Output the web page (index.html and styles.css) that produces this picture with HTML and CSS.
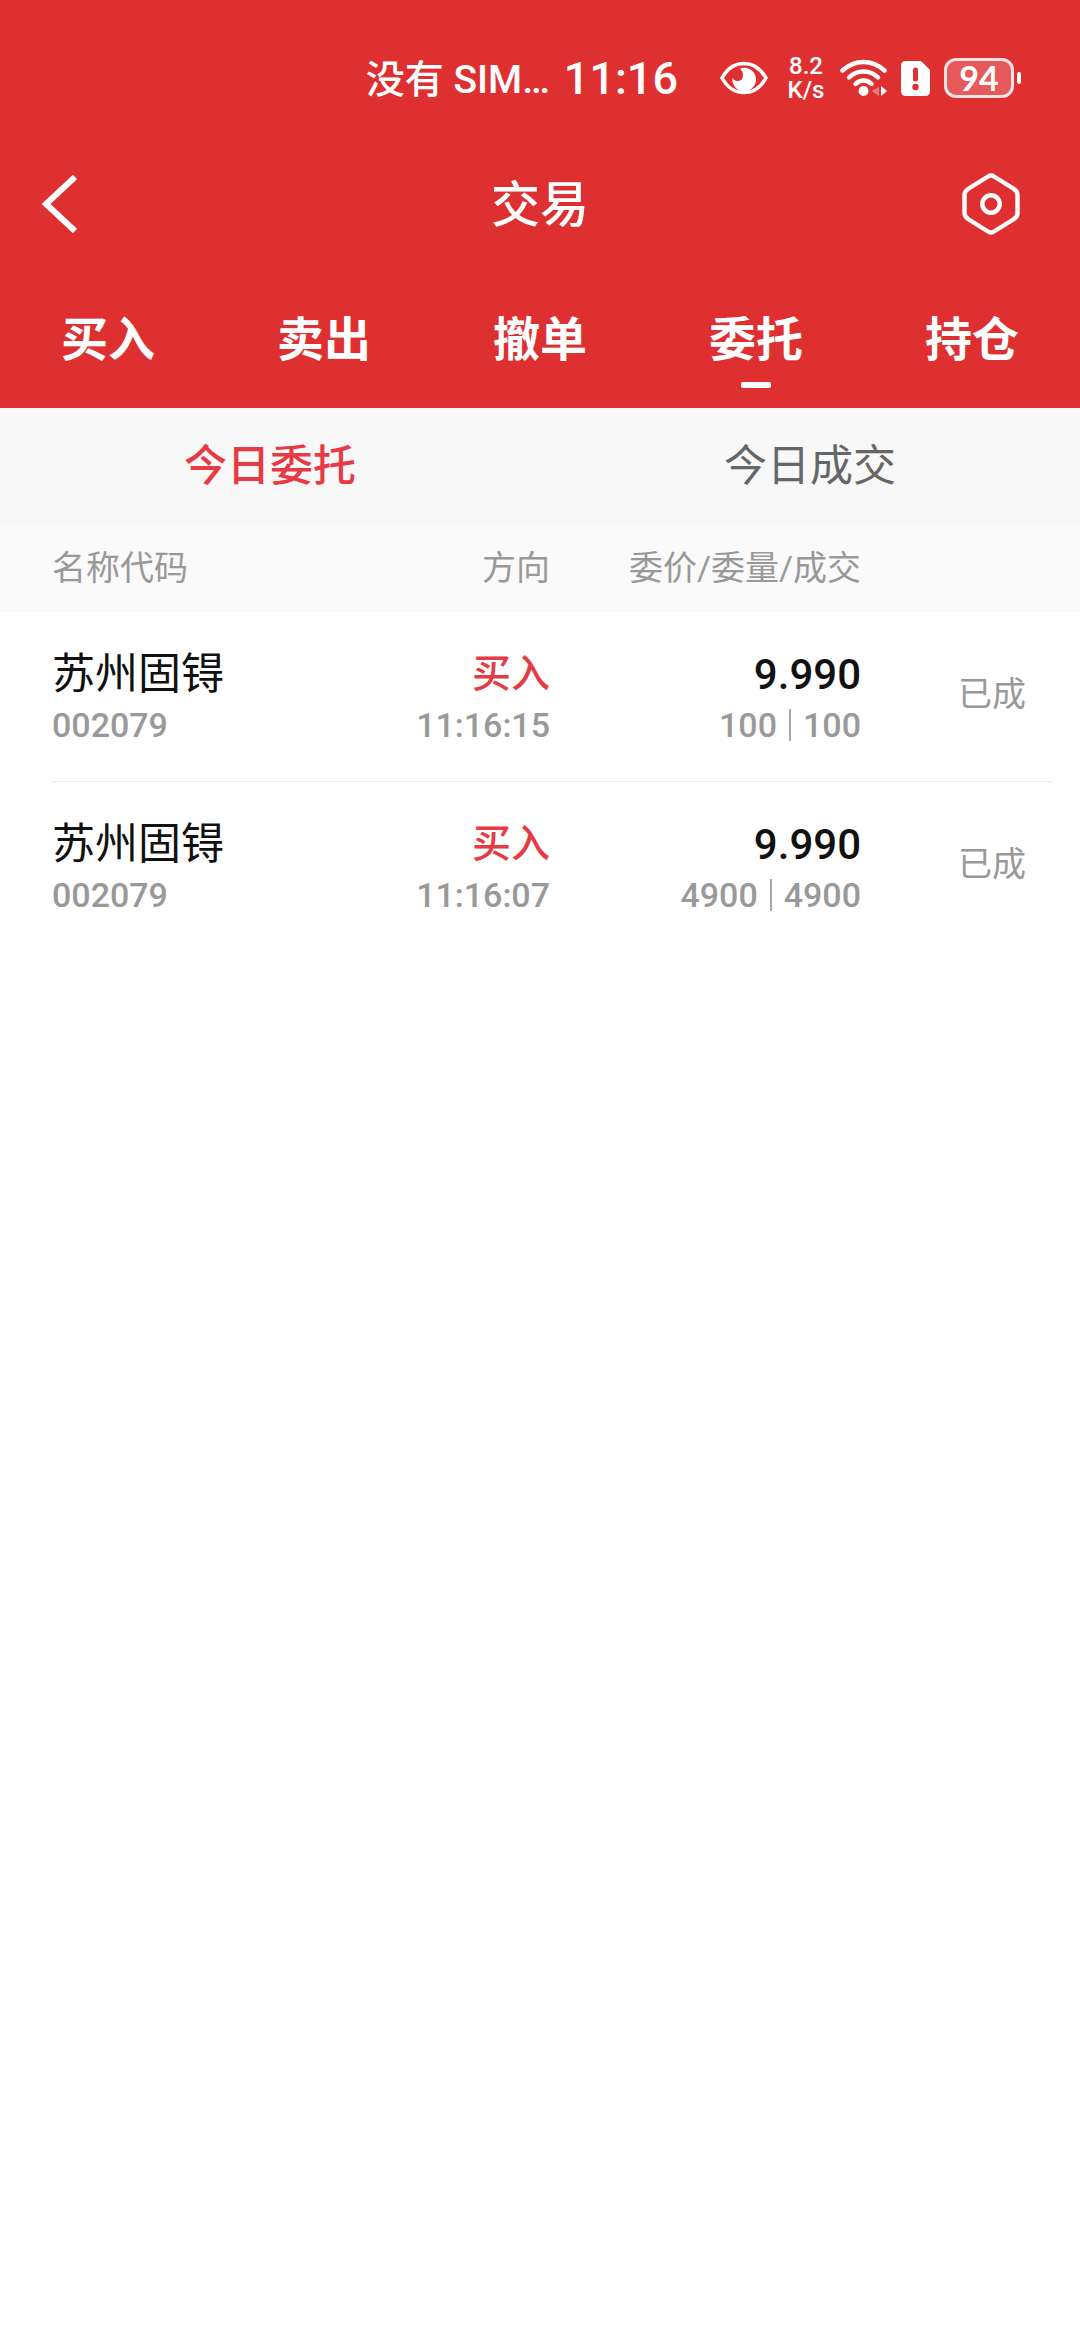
FILE: index.html
```html
<!DOCTYPE html>
<html lang="zh-CN">
<head>
  <title>交易</title>
  <meta charset="utf-8" />
  <meta name="viewport" content="width=device-width, initial-scale=1.0">
  <link rel="stylesheet" href="styles.css">
</head>
<body>

  <header class="top">

    <div class="status-bar">
      <span class="carrier">没有 SIM…</span>
      <span class="clock">11:16</span>
      <!-- eye comfort -->
      <svg class="icon" width="52" height="40" viewBox="0 0 52 40">
        <path d="M2 20C7 11 15 5.500 24 5.500S41 11 46 20C41 29 33 34.500 24 34.500S7 29 2 20Z" fill="none" stroke="#fff" stroke-width="3.600" stroke-linejoin="round" />
        <path d="M20 10.500A11.800 11.800 0 1 1 12.500 20Q14 23 17.500 23Q22.500 23 23 17.500Q23 13 20 10.500Z" fill="#fff" />
      </svg>
      <span class="speed">8.2<br />K/s</span>
      <!-- wifi -->
      <svg class="icon" width="47" height="40" viewBox="0 0 47 40">
        <g fill="none" stroke="#fff" stroke-width="4.400" stroke-linecap="round">
          <path d="M2.500 12.500Q12 4 23.500 4T44.500 12.500" />
          <path d="M9 19.500Q15 13.500 23.500 13.500T38 19.500" />
          <path d="M15.500 26Q19 22.500 23.500 22.500T31.500 26" />
        </g>
        <circle cx="23.500" cy="33" r="5" fill="#fff" />
        <path d="M39 29V38L31.500 33Z" fill="#fff" opacity="0.350" />
        <path d="M41 28L47 33L41 38Z" fill="#fff" />
      </svg>
      <!-- sim card -->
      <svg class="icon" width="29" height="40" viewBox="0 0 29 40">
        <path d="M5 3H20L29 12V33Q29 38 24 38H5Q0 38 0 33V8Q0 3 5 3Z" fill="#fff" />
        <path d="M14.500 12V21" stroke="#df3031" stroke-width="5" stroke-linecap="round" />
        <circle cx="14.500" cy="29" r="3.200" fill="#df3031" />
      </svg>
      <span class="battery">94</span>
    </div>

    <div class="title-bar">
      <button class="icon-button" type="button" aria-label="返回">
        <svg class="icon" width="40" height="64" viewBox="0 0 40 64">
          <path d="M35 5L6 32L35 59" fill="none" stroke="#fff" stroke-width="6" />
        </svg>
      </button>
      <h1 class="title">交易</h1>
      <button class="icon-button icon-button-right" type="button" aria-label="设置">
        <svg class="icon" width="62" height="64" viewBox="0 0 62 64">
          <path d="M28 4.500Q31 2.500 34 4.500L54 17Q57.500 19.500 57.500 23V41Q57.500 44.500 54 47L34 59.500Q31 61.500 28 59.500L8 47Q4.500 44.500 4.500 41V23Q4.500 19.500 8 17Z" fill="none" stroke="#fff" stroke-width="4.400" />
          <circle cx="31" cy="32" r="8.700" fill="none" stroke="#fff" stroke-width="4.400" />
        </svg>
      </button>
    </div>

    <nav class="tabs">
      <a class="tab" href="#buy">买入</a>
      <a class="tab" href="#sell">卖出</a>
      <a class="tab" href="#cancel">撤单</a>
      <a class="tab tab-active" href="#orders">委托</a>
      <a class="tab" href="#positions">持仓</a>
    </nav>

  </header>

  <main>

    <div class="subtabs">
      <button class="subtab subtab-active" type="button">今日委托</button>
      <button class="subtab" type="button">今日成交</button>
    </div>

    <table class="orders">
      <thead>
        <tr>
          <th>名称代码</th>
          <th>方向</th>
          <th>委价/委量/成交</th>
          <th></th>
        </tr>
      </thead>
      <tbody>
        <tr>
          <td><span class="name">苏州固锝</span><span class="sub">002079</span></td>
          <td><span class="side">买入</span><span class="sub">11:16:15</span></td>
          <td><span class="price">9.990</span><span class="sub">100<i class="bar"></i>100</span></td>
          <td class="state">已成</td>
        </tr>
        <tr>
          <td><span class="name">苏州固锝</span><span class="sub">002079</span></td>
          <td><span class="side">买入</span><span class="sub">11:16:07</span></td>
          <td><span class="price">9.990</span><span class="sub">4900<i class="bar"></i>4900</span></td>
          <td class="state">已成</td>
        </tr>
      </tbody>
    </table>

  </main>

</body>
</html>
```
FILE: styles.css
```css
body {
  margin: 0;
  background: #fff;
  color: #111;
  font-family: Roboto, "Noto Sans CJK SC", sans-serif;
}

button {
  margin: 0;
  padding: 0;
  border: 0;
  background: none;
  font-family: inherit;
}

.icon {
  display: block;
  flex: none;
}

/* Red header */

.top {
  background: #df3031;
  color: #fff;
}

.status-bar {
  display: flex;
  align-items: center;
  justify-content: flex-end;
  gap: 14px;
  height: 156px;
  padding-right: 59px;
}

.carrier {
  padding-bottom: 4px;
  font-size: 39px;
  font-weight: 500;
}

.clock {
  margin-right: 28px;
  font-size: 45px;
  font-weight: 500;
}

.speed {
  min-width: 40px;
  font-size: 24px;
  font-weight: 500;
  line-height: 24px;
  text-align: center;
}

.battery {
  position: relative;
  box-sizing: border-box;
  width: 70px;
  margin-right: 7px;
  border: 3px solid #fbe3e3;
  border-radius: 12px;
  background: #e65a5c;
  font-family: Lato, sans-serif;
  font-size: 34px;
  font-weight: 700;
  line-height: 34px;
  text-align: center;
}

.battery::after {
  content: "";
  position: absolute;
  top: 11px;
  right: -10px;
  width: 4px;
  height: 12px;
  border-radius: 2px;
  background: #fff;
}

.title-bar {
  display: grid;
  grid-template-columns: 1fr auto 1fr;
  align-items: center;
  height: 96px;
  padding: 0 40px;
}

.title {
  margin: 0;
  padding-top: 4px;
  font-size: 49px;
  font-weight: 500;
  line-height: 64px;
}

.icon-button-right {
  justify-self: end;
  margin-right: 18px;
}

.tabs {
  display: grid;
  grid-template-columns: repeat(5, 1fr);
  padding: 52px 0 20px;
}

.tab {
  display: flex;
  flex-direction: column;
  align-items: center;
  gap: 6px;
  color: #fff;
  font-size: 47px;
  font-weight: 700;
  line-height: 72px;
  text-decoration: none;
}

.tab::after {
  content: "";
  width: 30px;
  height: 6px;
  border-radius: 2px;
}

.tab-active::after {
  background: #fff;
}

/* Orders / deals switch */

.subtabs {
  display: grid;
  grid-template-columns: 1fr 1fr;
  background: #f8f8f8;
}

.subtab {
  padding: 26px 0 28px;
  color: #666;
  font-size: 43px;
  line-height: 64px;
}

.subtab-active {
  color: #e63b44;
  font-weight: 500;
}

/* Orders table */

.orders,
.orders thead,
.orders tbody {
  display: block;
}

.orders tr {
  display: grid;
  grid-template-columns: 238fr 260fr 311fr 191fr;
  align-items: center;
}

.orders thead tr {
  padding: 18px 28px 20px 52px;
  background: #fafafa;
}

.orders tbody tr {
  margin: 0 28px 0 52px;
  padding: 32px 0 35px;
}

.orders tbody tr + tr {
  border-top: 1px solid #ebebeb;
}

.orders th,
.orders td {
  padding: 0;
  text-align: right;
}

.orders th:first-child,
.orders td:first-child {
  text-align: left;
}

.orders th {
  color: #999;
  font-size: 34px;
  font-weight: 400;
  line-height: 48px;
}

.name,
.side,
.price {
  display: block;
  font-size: 43px;
  line-height: 60px;
}

.side {
  color: #e63b44;
  font-size: 39px;
  font-weight: 500;
}

.price {
  padding-top: 2px;
  font-size: 42px;
  font-weight: 500;
  line-height: 58px;
}

.sub {
  display: flex;
  align-items: center;
  justify-content: flex-end;
  color: #999;
  font-size: 34px;
  font-weight: 500;
  line-height: 42px;
}

td:first-child .sub {
  justify-content: flex-start;
}

.bar {
  width: 2px;
  height: 32px;
  margin: 0 12px;
  background: #a5a9ad;
}

.orders .state {
  padding: 0 26px 2px 0;
  color: #999;
  font-size: 34px;
  line-height: 48px;
}
```
